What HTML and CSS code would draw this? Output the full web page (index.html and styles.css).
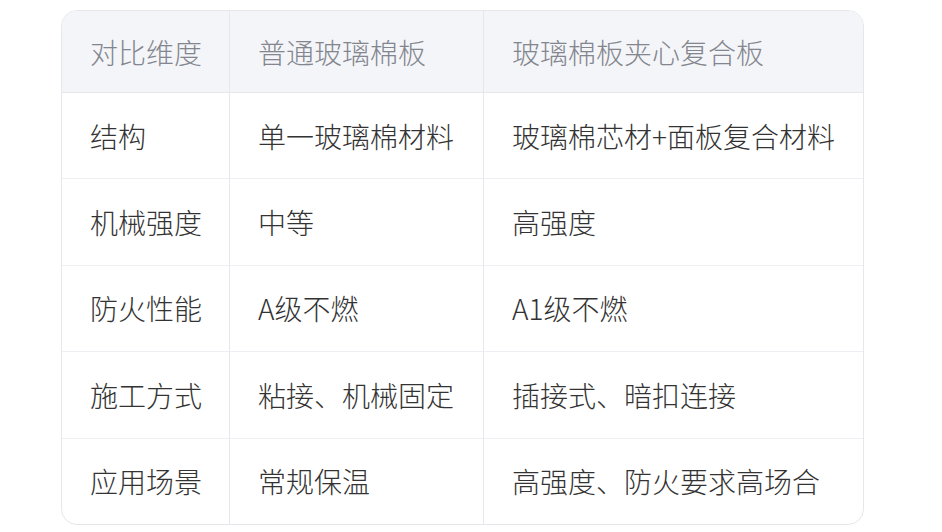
FILE: index.html
```html
<!DOCTYPE html>
<html lang="zh">
<head>
<meta charset="utf-8">
<link rel="stylesheet" href="styles.css">
</head>
<body>
<div class="page">
  <table class="cmp">
    <colgroup><col class="c1"><col class="c2"><col class="c3"></colgroup>
    <thead>
      <tr><th>对比维度</th><th>普通玻璃棉板</th><th>玻璃棉板夹心复合板</th></tr>
    </thead>
    <tbody>
      <tr><td>结构</td><td>单一玻璃棉材料</td><td>玻璃棉芯材+面板复合材料</td></tr>
      <tr><td>机械强度</td><td>中等</td><td>高强度</td></tr>
      <tr><td>防火性能</td><td>A级不燃</td><td>A1级不燃</td></tr>
      <tr><td>施工方式</td><td>粘接、机械固定</td><td>插接式、暗扣连接</td></tr>
      <tr><td>应用场景</td><td>常规保温</td><td>高强度、防火要求高场合</td></tr>
    </tbody>
  </table>
</div>
</body>
</html>
```
FILE: styles.css
```css
html, body {
  margin: 0;
  padding: 0;
  background: #ffffff;
}
.page {
  padding: 10px 0 0 61px;
  font-family: "Noto Sans CJK SC", "Noto Sans", sans-serif;
}
.cmp {
  width: 803px;
  table-layout: fixed;
  border-collapse: separate;
  border-spacing: 0;
  border: 1px solid #e6e7eb;
  border-radius: 16px;
  overflow: hidden;
  font-size: 28px;
  font-weight: 300;
}
.c1 { width: 167px; }
.c2 { width: 254px; }
.c3 { width: 380px; }
.cmp th, .cmp td {
  text-align: left;
  padding: 0 0 0 28px;
  white-space: nowrap;
  border-left: 1px solid #e6e7eb;
}
.cmp th:first-child, .cmp td:first-child {
  border-left: none;
}
.cmp th {
  height: 81px;
  background: #f4f5f8;
  color: #83868f;
  font-weight: 300;
  border-bottom: 1px solid #e6e7eb;
}
.cmp td {
  height: 85.4px;
  color: #333333;
  border-bottom: 1px solid #eeeff2;
}
.cmp tbody tr:last-child td {
  border-bottom: none;
}
```
